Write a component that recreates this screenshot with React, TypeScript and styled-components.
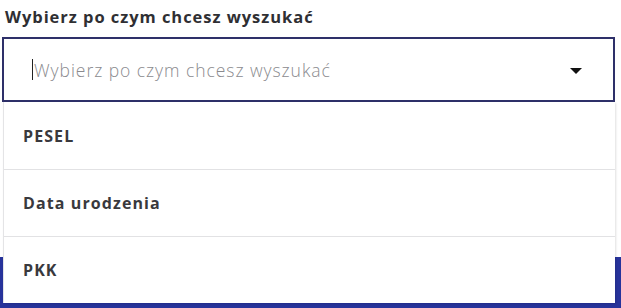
import React from 'react';
import styled, { createGlobalStyle } from 'styled-components';

const options = ['PESEL', 'Data urodzenia', 'PKK'];

const SearchPicker = () => {
  const [open] = React.useState(true);
  return (
    <Form>
      <GlobalStyle />
      <Label>Wybierz po czym chcesz wyszukać</Label>
      <SelectWrap>
        <SelectBox>
          <Caret />
          <Placeholder>Wybierz po czym chcesz wyszukać</Placeholder>
          <Arrow />
        </SelectBox>
        {open && (
          <Menu>
            {options.map((o) => (
              <Option key={o}>{o}</Option>
            ))}
          </Menu>
        )}
      </SelectWrap>
      <SubmitButton>Szukaj</SubmitButton>
    </Form>
  );
};

const GlobalStyle = createGlobalStyle`
  body {
    margin: 0;
    background: #ffffff;
    font-family: "Open Sans", "Liberation Sans", sans-serif;
    overflow: hidden;
  }
`;

const Form = styled.div`
  width: 621px;
  height: 308px;
  display: flex;
  flex-direction: column;
  & > * {
    flex-shrink: 0;
  }
`;

const Label = styled.div`
  padding: 5px 0 0 5px;
  height: 37px;
  box-sizing: border-box;
  font-size: 16.5px;
  font-weight: 700;
  color: #2f2f33;
  letter-spacing: 0.95px;
`;

const SelectWrap = styled.div`
  position: relative;
  margin: 0 6px 0 2px;
  z-index: 2;
`;

const SelectBox = styled.div`
  height: 65px;
  box-sizing: border-box;
  border: 2px solid #2e3069;
  display: flex;
  align-items: center;
  padding: 0 31px 0 28px;
  background: #fff;
`;

const Caret = styled.span`
  width: 1px;
  height: 21px;
  background: #222;
  margin-right: 1px;
`;

const Placeholder = styled.span`
  flex: 1;
  font-size: 17.5px;
  font-weight: 300;
  color: #8a8a8e;
  letter-spacing: 0.95px;
`;

const Arrow = styled.span`
  width: 0;
  height: 0;
  border-left: 6px solid transparent;
  border-right: 6px solid transparent;
  border-top: 6px solid #111;
  margin-top: 2px;
`;

const Menu = styled.div`
  position: absolute;
  top: 100%;
  left: 1px;
  right: 0;
  background: #fff;
  border-left: 1px solid #e4e4e6;
  box-shadow: 1px 1px 2px rgba(0, 0, 0, 0.12);
`;

const Option = styled.div`
  height: 67px;
  box-sizing: border-box;
  display: flex;
  align-items: center;
  padding-left: 19px;
  font-size: 16px;
  font-weight: 700;
  color: #39393d;
  letter-spacing: 1.1px;
  & + & {
    border-top: 1px solid #e2e2e4;
  }
`;

const SubmitButton = styled.button`
  margin-top: 155px;
  height: 51px;
  border: none;
  background: #27339b;
  color: #fff;
  font-family: inherit;
  font-size: 16px;
  font-weight: 700;
`;

export default SearchPicker;
